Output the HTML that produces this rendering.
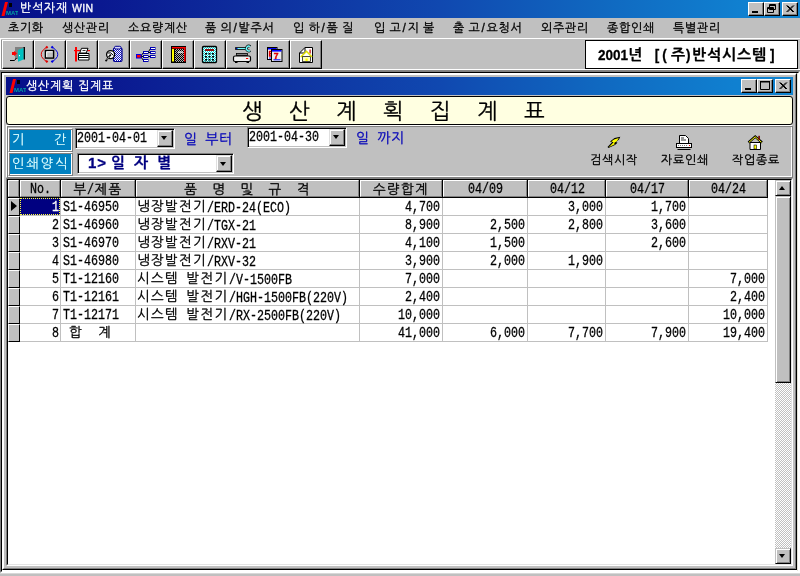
<!DOCTYPE html>
<html lang="ko"><head><meta charset="utf-8"><title>반석자재 WIN</title>
<style>
*{box-sizing:border-box;margin:0;padding:0}
html,body{width:800px;height:576px;overflow:hidden;background:#c0c0c0}
body{position:relative;font-family:"Liberation Sans","NanumGothic","Noto Sans CJK KR",sans-serif;font-size:12px;color:#000}
.abs{position:absolute}
.k{font-family:"Liberation Sans","NanumGothic","Noto Sans CJK KR",sans-serif;font-size:13.5px;letter-spacing:1.3px;white-space:pre;word-spacing:2.6px}
.m{font-family:"Liberation Mono","NanumGothic",monospace;font-size:15px;display:inline-block;transform:scaleX(.7778);white-space:pre}
.ml{transform-origin:0 50%}
.mr{transform-origin:100% 50%}
.mc{transform-origin:50% 50%}
.ms{transform-origin:0 50%;margin-left:-1.5px;margin-right:-.5px}
/* title */
#title{left:0;top:0;width:800px;height:18px;background:linear-gradient(90deg,#06108a 0,#0a1890 12.5%,#0e32a0 35%,#1048b0 55%,#1068c0 75%,#1080d0 92.5%,#1084d0 100%)}
.tt{color:#fff;font-size:12px;letter-spacing:.7px;line-height:14px;white-space:pre}
.wb{position:absolute;width:16px;height:14px;background:#c0c0c0;border:1px solid;border-color:#fff #000 #000 #fff;box-shadow:inset -1px -1px 0 #808080}
.wb svg{position:absolute;left:0;top:0}
#menu{left:0;top:18px;width:800px;height:20px}
#menu span{position:absolute;top:3px;font-size:12px;letter-spacing:.7px;line-height:14px;white-space:pre;word-spacing:-.5px}
#menu i{font-style:normal;padding:0 1px}
/* toolbar */
#tbline{left:0;top:38px;width:800px;height:1px;background:#fff}
#tbline2{left:0;top:69px;width:800px;height:2px;background:linear-gradient(#fff 50%,#868686 50%)}
.tb{position:absolute;top:40px;width:32px;height:29px;background:#c0c0c0;border:1px solid;border-color:#fff #000 #000 #fff;box-shadow:inset -1px -1px 0 #808080}
.tb svg{position:absolute;left:-1px;top:-1px}
#year{left:585px;top:40px;width:213px;height:29px;background:#fff;border:1px solid #000;font-weight:bold;line-height:27px;white-space:pre}
.yn{font-size:15px;transform:scaleX(.9);transform-origin:0 50%;display:inline-block}
.yk{font-size:15px;letter-spacing:.9px}
/* mdi */
#mdi{left:0;top:71px;width:800px;height:502px;border:1px solid;border-color:#808080 #fff #fff #808080}
#mdi2{left:1px;top:72px;width:798px;height:500px;border:1px solid;border-color:#000 #fff #fff #000;background:linear-gradient(#e4e4d8,#e4e4d8) 795px 0/1px 100% no-repeat,linear-gradient(#fff,#fff) 0 497px/100% 1px no-repeat}
#child{left:2px;top:73px;width:795px;height:497px;background:#c0c0c0;border:1px solid;border-color:#fff #000 #000 #fff}
#child2{left:3px;top:74px;width:793px;height:495px;border:1px solid;border-color:#fff #808080 #808080 #fff}
#ctitle{left:6px;top:77px;width:787px;height:18px;background:linear-gradient(90deg,#06108a 0,#0a1890 12.5%,#0e32a0 35%,#1048b0 55%,#1068c0 75%,#1080d0 92.5%,#1084d0 100%)}
#ypanel{left:6px;top:96px;width:787px;height:29px;background:#ffffe1;border:1px solid #000;border-radius:3px}
#ytext{left:242px;top:98px;width:400px;height:29px;font-size:22px;line-height:28px;white-space:pre;letter-spacing:26.320px}
#fpanel{left:6px;top:125px;width:787px;height:53px;border:1px solid;border-color:#fff #808080 #808080 #fff;box-shadow:inset 1px 1px 0 #808080,inset -1px -1px 0 #fff}
.lbl{position:absolute;left:8px;width:65px;background:#0080c0;border:1px solid;border-color:#fff #808080 #808080 #fff;box-shadow:inset 1px 1px 0 #808080,inset -1px -1px 0 #fff;color:#e0ffff;font-size:13px;white-space:pre;-webkit-text-stroke:.15px}
.inp{position:absolute;background:#fff;border:1px solid;border-color:#808080 #fff #fff #808080;box-shadow:inset 1px 1px 0 #000,inset -1px -1px 0 #c0c0c0}
.dd{position:absolute;width:16px;background:#c0c0c0;border:1px solid;border-color:#dfdfdf #000 #000 #dfdfdf;box-shadow:inset -1px -1px 0 #808080,inset 1px 1px 0 #fff}
.dd i{position:absolute;left:3px;top:5px;border:3.5px solid transparent;border-top:4px solid #000;border-bottom:0}
.bl{position:absolute;color:#0808b8;font-size:14px;letter-spacing:.85px;white-space:pre;line-height:16px;word-spacing:2.5px}
.act{position:absolute;font-size:12px;letter-spacing:.7px;line-height:14px;white-space:pre}
/* grid */
#gb1{left:6px;top:178px;width:787px;height:388px;border:1px solid;border-color:#808080 #fff #fff #808080}
#gb2{left:7px;top:179px;width:785px;height:386px;border:1px solid;border-color:#000 #e4e4e4 #e4e4e4 #000;background:#fff}
#grid{left:0;top:0;width:800px;height:576px}
.hc{position:absolute;top:180px;height:17px;background:#c0c0c0;border:1px solid;border-color:#fff #808080 #808080 #fff;text-align:center;line-height:17px;white-space:nowrap;overflow:visible}
.vb{position:absolute;top:180px;width:1px;height:17px;background:#000}
.hb{position:absolute;left:8px;top:197px;width:760px;height:1px;background:#000}
.ic{position:absolute;left:8px;width:12px;height:18px;background:#c0c0c0;border:1px solid;border-color:#fff #000 #000 #fff}
.hl{position:absolute;left:20px;width:748px;height:1px;background:#c0c0c0}
.vl{position:absolute;top:198px;width:1px;height:144px;background:#c0c0c0}
.c{position:absolute;height:17px;line-height:17px;padding:0 2px 0 2px;white-space:nowrap;overflow:visible}
.c.r{text-align:right;padding-right:2px}
.hc .m{position:relative;left:1px}
.c .m{position:relative;top:1px}
.c .k{margin-left:-1px}
.c.sel{background:#000080;color:#fff;outline:1px dotted #ffff40;outline-offset:-1px}
.ind{position:absolute;left:11px;top:201px;border:5px solid transparent;border-left:6px solid #000;border-right:0}
#sb{left:775px;top:180px;width:16px;height:384px;background:#dfdfdf;background-image:conic-gradient(#fff 25%,#c0c0c0 0 50%,#fff 0 75%,#c0c0c0 0);background-size:2px 2px}
.sbb{position:absolute;left:775px;width:16px;height:16px;background:#c0c0c0;border:1px solid;border-color:#c0c0c0 #000 #000 #c0c0c0;box-shadow:inset 1px 1px 0 #fff,inset -1px -1px 0 #808080}
.au{position:absolute;left:3px;top:5px;border:3.5px solid transparent;border-bottom:4px solid #000;border-top:0}
.ad{position:absolute;left:3px;top:5px;border:3.5px solid transparent;border-top:4px solid #000;border-bottom:0}
.cb{font-weight:bold;color:#000080;font-size:15px;line-height:17px;white-space:pre;letter-spacing:.9px;word-spacing:3px}
#app{position:absolute;left:0;top:0;width:800px;height:576px;will-change:transform;overflow:hidden;-webkit-text-stroke:.3px}
</style></head><body><div id="app">
<svg class="abs" width="0" height="0" style="left:0;top:0"><defs>
<pattern id="pb" width="2" height="2" patternUnits="userSpaceOnUse"><rect width="2" height="2" fill="#fff"/><rect width="1" height="1" fill="#1818c0"/><rect x="1" y="1" width="1" height="1" fill="#1818c0"/></pattern>
<pattern id="pk" width="2" height="2" patternUnits="userSpaceOnUse"><rect width="2" height="2" fill="#b0b0b0"/><rect width="1" height="1" fill="#000"/><rect x="1" y="1" width="1" height="1" fill="#000"/></pattern>
<pattern id="pc" width="2" height="2" patternUnits="userSpaceOnUse"><rect width="2" height="2" fill="#fff"/><rect width="1" height="1" fill="#00e0e0"/><rect x="1" y="1" width="1" height="1" fill="#00e0e0"/></pattern>
</defs></svg>
<div id="title" class="abs">
<svg class="abs" style="left:0px;top:1px" width="18" height="16" viewBox="0 0 18 16"><path d="M5 1h3L4.500 15h-3z" fill="#f00"/><rect x="9" y="2" width="3" height="4" fill="#000"/><text x="6" y="14" font-family="Liberation Sans,sans-serif" font-size="6" font-weight="bold" fill="#00a0a0">MAT</text></svg>
<span class="abs tt" style="left:20px;top:1px">반석자재 <span style="font-size:10.500px;letter-spacing:.3px">WIN</span></span>
<div class="wb" style="left:748px;top:2px"><svg width="14" height="12"><rect x="3" y="8" width="6" height="2"/></svg></div>
<div class="wb" style="left:764px;top:2px"><svg width="14" height="12"><path d="M4.500 1.500h6v5h-6zM4.500 2.500h6M2.500 4.500h6v5h-6zM2.500 5.500h6" fill="#c0c0c0" stroke="#000"/></svg></div>
<div class="wb" style="left:782px;top:2px"><svg width="14" height="12"><path d="M3.500 2.500l6.500 6.500M4.500 2.500l6.500 6.500M10 2.500l-6.500 6.500M11 2.500l-6.500 6.500" stroke="#000" stroke-width="1"/></svg></div>
</div>
<div id="menu" class="abs">
<span style="left:8px">초기화</span>
<span style="left:62px">생산관리</span>
<span style="left:128px">소요량계산</span>
<span style="left:205px">품 의<i>/</i>발주서</span>
<span style="left:293px">입 하<i>/</i>품 질</span>
<span style="left:374px">입 고<i>/</i>지 불</span>
<span style="left:453px">출 고<i>/</i>요청서</span>
<span style="left:541px">외주관리</span>
<span style="left:607px">종합인쇄</span>
<span style="left:673px">특별관리</span>
</div>
<div id="tbline" class="abs"></div><div class="abs" style="left:0;top:38px;width:1px;height:32px;background:#fff"></div><div class="abs" style="left:1px;top:40px;width:1px;height:29px;background:#909090"></div><div id="tbline2" class="abs"></div>
<div class="tb" style="left:2px"><svg width="32" height="29" viewBox="0 0 32 29"><rect x="13" y="7" width="10" height="12" fill="#808080"/><rect x="21.500" y="7" width="1.500" height="12.500" fill="#000"/><path d="M16 10L21.500 8V19.600L16 21.800z" fill="#00c0c0"/><rect x="17" y="15" width="1" height="1.200" fill="#fff"/><path d="M10 12h2.200v-1.200L15 13.500 12.200 16.200V15H10z" fill="#f00"/><path d="M8 20.500H12.500L14.500 18" fill="none" stroke="#000"/></svg></div>
<div class="tb" style="left:34px"><svg width="32" height="29" viewBox="0 0 32 29"><rect x="11.400" y="10.500" width="8.200" height="7.600" fill="#c0c0c0" stroke="#000" stroke-width="1.400"/><path d="M12.700 17V11.800H18.600" fill="none" stroke="#fff" stroke-width="1"/><path d="M12.600 7.200Q9 9.500 7.600 12.200Q6.900 14.400 7.600 16.600Q9 19.300 12.600 21.600" fill="none" stroke="#e00000" stroke-width="1"/><path d="M18.400 7.200Q22 9.500 23.400 12.200Q24.100 14.400 23.400 16.600Q22 19.300 18.400 21.600" fill="none" stroke="#0000e0" stroke-width="1"/><path d="M12.800 5.700l1.500 1.500-1.500 1.500-1.500-1.500zM12.800 20.100l1.500 1.500-1.500 1.500-1.500-1.500z" fill="#e00000"/><path d="M18.200 5.700l1.500 1.500-1.500 1.500-1.500-1.500zM18.200 20.100l1.500 1.500-1.500 1.500-1.500-1.500z" fill="#0000e0"/></svg></div>
<div class="tb" style="left:66px"><svg width="32" height="29" viewBox="0 0 32 29"><rect x="8" y="10" width="16" height="1.200" fill="#f00"/><rect x="9" y="7" width="2" height="14.500" fill="#f00"/><path d="M12.500 13.500h10.500v6.500h-10.500z" fill="#fff" stroke="#000"/><path d="M13 15.500h9.500M13 17.500h9.500" stroke="#000"/><path d="M15.500 8.300h6.500l-1.800 4.700h-6.500z" fill="#fff" stroke="#000"/><path d="M16.500 10.500h3" stroke="#000" stroke-width=".8"/></svg></div>
<div class="tb" style="left:98px"><svg width="32" height="29" viewBox="0 0 32 29"><rect x="15.500" y="8" width="8.500" height="13.500" rx="1.200" fill="url(#pb)" stroke="#000090" stroke-width="1.200"/><rect x="16.500" y="6.300" width="6.500" height="2.700" rx="1.200" fill="#d8d8f8" stroke="#000090"/><circle cx="12.600" cy="14.600" r="4" fill="#fff" stroke="#000" stroke-width="1.300"/><path d="M9.500 13q3.500-1.500 6 2.500" fill="none" stroke="#000"/><path d="M12.800 14.500L7.600 21.200" stroke="#000" stroke-width="1.700"/><path d="M11.300 16.500L8.600 20" stroke="#fff" stroke-width=".6"/></svg></div>
<div class="tb" style="left:130px"><svg width="32" height="29" viewBox="0 0 32 29"><path d="M11 16L13.500 12.500M11 16.500H13.500M11 17L13.500 20.500M18 12.500L20.500 8.500M18 12.500H20.500M18 16.500H20.500" stroke="#000" fill="none"/><rect x="6.500" y="14.500" width="4.500" height="3.500" fill="#f00" stroke="#0000f0"/><g fill="#fff" stroke="#0000b0"><rect x="13.500" y="11.500" width="4.500" height="2"/><rect x="13.500" y="15.500" width="4.500" height="2"/><rect x="13.500" y="19.500" width="4.500" height="2"/><rect x="20.500" y="7.500" width="4.500" height="2"/><rect x="20.500" y="11.500" width="4.500" height="2"/><rect x="20.500" y="15.500" width="4.500" height="2"/></g></svg></div>
<div class="tb" style="left:162px"><svg width="32" height="29" viewBox="0 0 32 29"><rect x="9.500" y="6.500" width="14" height="16" fill="#000" stroke="#000"/><rect x="13" y="9" width="9" height="13" fill="url(#pk)"/><rect x="10" y="7" width="13.500" height="1.500" fill="#f00"/><rect x="22" y="7" width="1.500" height="14.500" fill="#f00"/><rect x="10" y="9" width="2" height="12.500" fill="#ffff00"/><rect x="16" y="11.500" width="5" height="1.200" fill="#fff"/></svg></div>
<div class="tb" style="left:194px"><svg width="32" height="29" viewBox="0 0 32 29"><rect x="8.500" y="6.500" width="14" height="16" rx="1" fill="url(#pc)" stroke="#000" stroke-width="1.300"/><rect x="11" y="9" width="9" height="2" fill="#901010"/><g fill="#000"><rect x="11" y="13" width="2" height="1.600"/><rect x="14.500" y="13" width="2" height="1.600"/><rect x="18" y="13" width="2" height="1.600"/><rect x="11" y="16" width="2" height="1.600"/><rect x="14.500" y="16" width="2" height="1.600"/><rect x="18" y="16" width="2" height="1.600"/><rect x="11" y="19" width="2" height="1.600"/><rect x="14.500" y="19" width="2" height="1.600"/><rect x="18" y="19" width="2" height="1.600"/></g></svg></div>
<div class="tb" style="left:226px"><svg width="32" height="29" viewBox="0 0 32 29"><path d="M9.200 8.500H20.500" stroke="#000" stroke-width="2.800"/><path d="M10 8.500H20.800" stroke="#70ffff" stroke-width="1.200"/><rect x="10" y="8" width="1.500" height="1" fill="#0000c0"/><path d="M24.300 6.400a2.500 2.500 0 1 0 0 4.200" fill="none" stroke="#000" stroke-width="2.800"/><path d="M24.100 6.500a2.400 2.400 0 1 0 0 4" fill="none" stroke="#70ffff" stroke-width="1.500"/><rect x="10.500" y="13.500" width="11" height="2" fill="#808080" stroke="#000" stroke-width=".8"/><rect x="7.500" y="16" width="17" height="5.500" rx="1.500" fill="#f0f0f0" stroke="#000" stroke-width="1.200"/><rect x="20" y="18" width="2.200" height="1" fill="#f00"/><rect x="9" y="22" width="2.500" height="1" fill="#000"/><rect x="20.500" y="22" width="2.500" height="1" fill="#000"/></svg></div>
<div class="tb" style="left:258px"><svg width="32" height="29" viewBox="0 0 32 29"><rect x="9.500" y="7.500" width="9.500" height="12" fill="#fff" stroke="#000"/><rect x="10" y="8" width="8.500" height="1.500" fill="#0000ff"/><path d="M14 11.500h-2.500v4.500h2.500M11.500 13.700h2" stroke="#e00000" stroke-width="1.400" fill="none"/><rect x="11" y="17.500" width="3" height="1" fill="#0000ff"/><rect x="13.500" y="9.500" width="10.500" height="12" fill="#ececec" stroke="#000"/><rect x="14" y="10" width="9.500" height="1.600" fill="#0000ff"/><text x="15.800" y="18.800" font-family="Liberation Sans,sans-serif" font-size="8.500" font-weight="bold" fill="#e00000" stroke="#e00000" stroke-width=".4">7</text><rect x="15.500" y="19.300" width="7" height="1" fill="#0000ff"/></svg></div>
<div class="tb" style="left:290px"><svg width="32" height="29" viewBox="0 0 32 29"><path d="M9.500 13L15 7.500H22.500V22.500H9.500z" fill="#fff" stroke="#000"/><path d="M9.500 13H15V7.500" fill="none" stroke="#000"/><rect x="19.500" y="9.500" width="1.200" height="4" fill="#c00000"/><rect x="12.500" y="16.500" width="8" height="5" fill="#ffffc0" stroke="#000" stroke-width=".7"/><path d="M10.800 17L16.500 11.300L22 17" fill="none" stroke="#e0e000" stroke-width="1.600"/><rect x="15.500" y="18.500" width="2.200" height="2.500" fill="#ffff00"/></svg></div>
<div id="year" class="abs"><span class="abs yn" style="left:12px;top:0">2001</span><span class="abs yk" style="left:42px;top:0">년</span><span class="abs yn" style="left:62px;top:0;letter-spacing:3.300px"> [(</span><span class="abs yk" style="left:85px;top:0">주</span><span class="abs yn" style="left:100px;top:0;letter-spacing:3.300px">)</span><span class="abs yk" style="left:106px;top:0">반석시스템</span><span class="abs yn" style="left:184px;top:0">]</span></div>
<div id="mdi" class="abs"></div><div id="mdi2" class="abs"></div>
<div id="child" class="abs"></div><div id="child2" class="abs"></div>
<div id="ctitle" class="abs">
<svg class="abs" style="left:2px;top:1px" width="18" height="16" viewBox="0 0 18 16"><path d="M5 1h3L4.500 15h-3z" fill="#f00"/><rect x="9" y="2" width="3" height="4" fill="#000"/><text x="6" y="14" font-family="Liberation Sans,sans-serif" font-size="6" font-weight="bold" fill="#00a0a0">MAT</text></svg>
<span class="abs tt" style="left:20px;top:2px">생산계획 집계표</span>
<div class="wb" style="left:735px;top:2px"><svg width="14" height="12"><rect x="3" y="8" width="6" height="2"/></svg></div>
<div class="wb" style="left:751px;top:2px"><svg width="14" height="12"><path d="M2.500 2h9v7.500h-9z" fill="none" stroke="#000"/><path d="M2 1.500h10" stroke="#000"/></svg></div>
<div class="wb" style="left:769px;top:2px"><svg width="14" height="12"><path d="M3.500 2.500l6.500 6.500M4.500 2.500l6.500 6.500M10 2.500l-6.500 6.500M11 2.500l-6.500 6.500" stroke="#000" stroke-width="1"/></svg></div>
</div>
<div id="ypanel" class="abs"></div>
<div id="ytext" class="abs">생산계획집계표</div>
<div id="fpanel" class="abs"></div>
<div class="lbl" style="top:128px;height:24px;line-height:22px"><span class="abs" style="left:3px">기</span><span class="abs" style="left:45px">간</span></div>
<div class="lbl" style="top:152px;height:24px;line-height:22px"><span class="abs" style="left:3px;letter-spacing:2.2px">인쇄양식</span></div>
<div class="inp" style="left:75px;top:128px;width:100px;height:21px"><span class="m ml abs" style="left:1px;top:2px;line-height:16px">2001-04-01</span><div class="dd" style="left:81px;top:1px;height:17px"><i></i></div></div>
<span class="bl" style="left:184px;top:131px">일 부터</span>
<div class="inp" style="left:247px;top:127px;width:100px;height:21px"><span class="m ml abs" style="left:1px;top:2px;line-height:16px">2001-04-30</span><div class="dd" style="left:81px;top:1px;height:17px"><i></i></div></div>
<span class="bl" style="left:356px;top:130px">일 까지</span>
<div class="inp" style="left:77px;top:153px;width:157px;height:21px"><span class="abs cb" style="left:10px;top:0">1&gt;</span><span class="abs cb" style="left:33px;top:0">일 자 별</span><div class="dd" style="left:138px;top:1px;height:17px"><i style="top:6px"></i></div></div>
<span class="act" style="left:590px;top:153px">검색시작</span>
<span class="act" style="left:661px;top:153px">자료인쇄</span>
<span class="act" style="left:732px;top:153px">작업종료</span>
<svg class="abs" style="left:604px;top:133px" width="20" height="18" viewBox="604 133 20 18"><path d="M620.300 136.800L614.500 138L610 141.500L612 142.300L607.500 147L608.500 148L615 145L617.500 142.800L616 142L619 139.500z" fill="#000"/><path d="M618.800 138L614 139.400L611.300 141.500L613.600 142.300L608.800 147.200L615.200 144L613.800 143.200L617 141z" fill="#ffff00"/></svg>
<svg class="abs" style="left:674px;top:133px" width="20" height="19" viewBox="674 133 20 19"><path d="M679.500 135.500h6l3 3v5.500h-9z" fill="#fff" stroke="#000"/><path d="M681 138h3M681 140h5" stroke="#000" stroke-width=".8"/><rect x="676.500" y="143.500" width="15" height="4" fill="#fff" stroke="#000"/><path d="M678 145.500h10" stroke="#808080" stroke-dasharray="1 1"/><rect x="689" y="145" width="1" height="1" fill="#f00"/><path d="M677.500 149.500h13" stroke="#000"/></svg>
<svg class="abs" style="left:746px;top:133px" width="20" height="19" viewBox="746 133 20 19"><path d="M750 142.500h10.500v7h-10.500z" fill="#fff" stroke="#000"/><path d="M748.500 142.500L755.200 136.500L762 142.500" fill="none" stroke="#000" stroke-width="2.400"/><path d="M749 142.300L755.200 136.800L761.500 142.300" fill="none" stroke="#ffff00" stroke-width="1"/><rect x="758.300" y="135.800" width="1.600" height="4" fill="#700000"/><rect x="754" y="145" width="2.500" height="4" fill="#ffff00" stroke="#000" stroke-width=".6"/></svg>
<div id="gb1" class="abs"></div><div id="gb2" class="abs"></div>
<div id="sb" class="abs"></div>
<div class="sbb" style="top:180px"><i class="au"></i></div>
<div class="sbb" style="top:196px;height:187px"></div>
<div class="sbb" style="top:548px"><i class="ad"></i></div>
<div id="grid" class="abs">
<div class="hc" style="left:8px;width:11px"></div>
<div class="vb" style="left:19px"></div>
<div class="hc" style="left:20px;width:40px"><span class="m mc">No.</span></div>
<div class="vb" style="left:60px"></div>
<div class="hc" style="left:61px;width:74px"><span class="k">부</span><span class="m ms">/</span><span class="k">제품</span></div>
<div class="vb" style="left:135px"></div>
<div class="hc" style="left:136px;width:223px"><span class="k" style="word-spacing:2px">품  명  및  규  격</span></div>
<div class="vb" style="left:359px"></div>
<div class="hc" style="left:360px;width:82px"><span class="k">수량합계</span></div>
<div class="vb" style="left:442px"></div>
<div class="hc" style="left:443px;width:84px"><span class="m mc">04/09</span></div>
<div class="vb" style="left:527px"></div>
<div class="hc" style="left:528px;width:77px"><span class="m mc">04/12</span></div>
<div class="vb" style="left:605px"></div>
<div class="hc" style="left:606px;width:82px"><span class="m mc">04/17</span></div>
<div class="vb" style="left:688px"></div>
<div class="hc" style="left:689px;width:78px"><span class="m mc">04/24</span></div>
<div class="vb" style="left:767px"></div>
<div class="hb"></div>
<div class="ic" style="top:198px"></div>
<div class="hl" style="top:215px"></div>
<div class="c r sel" style="left:20px;width:40px;top:198px;padding-right:1px"><span class="m mr">1</span></div>
<div class="c" style="left:61px;width:74px;top:198px"><span class="m ml">S1-46950</span></div>
<div class="c" style="left:136px;width:223px;top:198px"><span class="k">냉장발전기</span><span class="m ml">/ERD-24(ECO)</span></div>
<div class="c r" style="left:360px;width:82px;top:198px"><span class="m mr">4,700</span></div>
<div class="c r" style="left:528px;width:77px;top:198px"><span class="m mr">3,000</span></div>
<div class="c r" style="left:606px;width:82px;top:198px"><span class="m mr">1,700</span></div>
<div class="ic" style="top:216px"></div>
<div class="hl" style="top:233px"></div>
<div class="c r" style="left:20px;width:40px;top:216px;padding-right:1px"><span class="m mr">2</span></div>
<div class="c" style="left:61px;width:74px;top:216px"><span class="m ml">S1-46960</span></div>
<div class="c" style="left:136px;width:223px;top:216px"><span class="k">냉장발전기</span><span class="m ml">/TGX-21</span></div>
<div class="c r" style="left:360px;width:82px;top:216px"><span class="m mr">8,900</span></div>
<div class="c r" style="left:443px;width:84px;top:216px"><span class="m mr">2,500</span></div>
<div class="c r" style="left:528px;width:77px;top:216px"><span class="m mr">2,800</span></div>
<div class="c r" style="left:606px;width:82px;top:216px"><span class="m mr">3,600</span></div>
<div class="ic" style="top:234px"></div>
<div class="hl" style="top:251px"></div>
<div class="c r" style="left:20px;width:40px;top:234px;padding-right:1px"><span class="m mr">3</span></div>
<div class="c" style="left:61px;width:74px;top:234px"><span class="m ml">S1-46970</span></div>
<div class="c" style="left:136px;width:223px;top:234px"><span class="k">냉장발전기</span><span class="m ml">/RXV-21</span></div>
<div class="c r" style="left:360px;width:82px;top:234px"><span class="m mr">4,100</span></div>
<div class="c r" style="left:443px;width:84px;top:234px"><span class="m mr">1,500</span></div>
<div class="c r" style="left:606px;width:82px;top:234px"><span class="m mr">2,600</span></div>
<div class="ic" style="top:252px"></div>
<div class="hl" style="top:269px"></div>
<div class="c r" style="left:20px;width:40px;top:252px;padding-right:1px"><span class="m mr">4</span></div>
<div class="c" style="left:61px;width:74px;top:252px"><span class="m ml">S1-46980</span></div>
<div class="c" style="left:136px;width:223px;top:252px"><span class="k">냉장발전기</span><span class="m ml">/RXV-32</span></div>
<div class="c r" style="left:360px;width:82px;top:252px"><span class="m mr">3,900</span></div>
<div class="c r" style="left:443px;width:84px;top:252px"><span class="m mr">2,000</span></div>
<div class="c r" style="left:528px;width:77px;top:252px"><span class="m mr">1,900</span></div>
<div class="ic" style="top:270px"></div>
<div class="hl" style="top:287px"></div>
<div class="c r" style="left:20px;width:40px;top:270px;padding-right:1px"><span class="m mr">5</span></div>
<div class="c" style="left:61px;width:74px;top:270px"><span class="m ml">T1-12160</span></div>
<div class="c" style="left:136px;width:223px;top:270px"><span class="k">시스템 발전기</span><span class="m ml">/V-1500FB</span></div>
<div class="c r" style="left:360px;width:82px;top:270px"><span class="m mr">7,000</span></div>
<div class="c r" style="left:689px;width:78px;top:270px"><span class="m mr">7,000</span></div>
<div class="ic" style="top:288px"></div>
<div class="hl" style="top:305px"></div>
<div class="c r" style="left:20px;width:40px;top:288px;padding-right:1px"><span class="m mr">6</span></div>
<div class="c" style="left:61px;width:74px;top:288px"><span class="m ml">T1-12161</span></div>
<div class="c" style="left:136px;width:223px;top:288px"><span class="k">시스템 발전기</span><span class="m ml">/HGH-1500FB(220V)</span></div>
<div class="c r" style="left:360px;width:82px;top:288px"><span class="m mr">2,400</span></div>
<div class="c r" style="left:689px;width:78px;top:288px"><span class="m mr">2,400</span></div>
<div class="ic" style="top:306px"></div>
<div class="hl" style="top:323px"></div>
<div class="c r" style="left:20px;width:40px;top:306px;padding-right:1px"><span class="m mr">7</span></div>
<div class="c" style="left:61px;width:74px;top:306px"><span class="m ml">T1-12171</span></div>
<div class="c" style="left:136px;width:223px;top:306px"><span class="k">시스템 발전기</span><span class="m ml">/RX-2500FB(220V)</span></div>
<div class="c r" style="left:360px;width:82px;top:306px"><span class="m mr">10,000</span></div>
<div class="c r" style="left:689px;width:78px;top:306px"><span class="m mr">10,000</span></div>
<div class="ic" style="top:324px"></div>
<div class="hl" style="top:341px"></div>
<div class="c r" style="left:20px;width:40px;top:324px;padding-right:1px"><span class="m mr">8</span></div>
<div class="c" style="left:61px;width:74px;top:324px"><span class="k" style="padding-left:7px">합  계</span></div>
<div class="c r" style="left:360px;width:82px;top:324px"><span class="m mr">41,000</span></div>
<div class="c r" style="left:443px;width:84px;top:324px"><span class="m mr">6,000</span></div>
<div class="c r" style="left:528px;width:77px;top:324px"><span class="m mr">7,700</span></div>
<div class="c r" style="left:606px;width:82px;top:324px"><span class="m mr">7,900</span></div>
<div class="c r" style="left:689px;width:78px;top:324px"><span class="m mr">19,400</span></div>
<div class="vl" style="left:60px"></div>
<div class="vl" style="left:135px"></div>
<div class="vl" style="left:359px"></div>
<div class="vl" style="left:442px"></div>
<div class="vl" style="left:527px"></div>
<div class="vl" style="left:605px"></div>
<div class="vl" style="left:688px"></div>
<div class="vl" style="left:767px"></div>
<div class="ind"></div>
</div>
<div class="abs" style="left:0;top:573px;width:800px;height:1px;background:#d8d8d8"></div>
</div></body></html>
